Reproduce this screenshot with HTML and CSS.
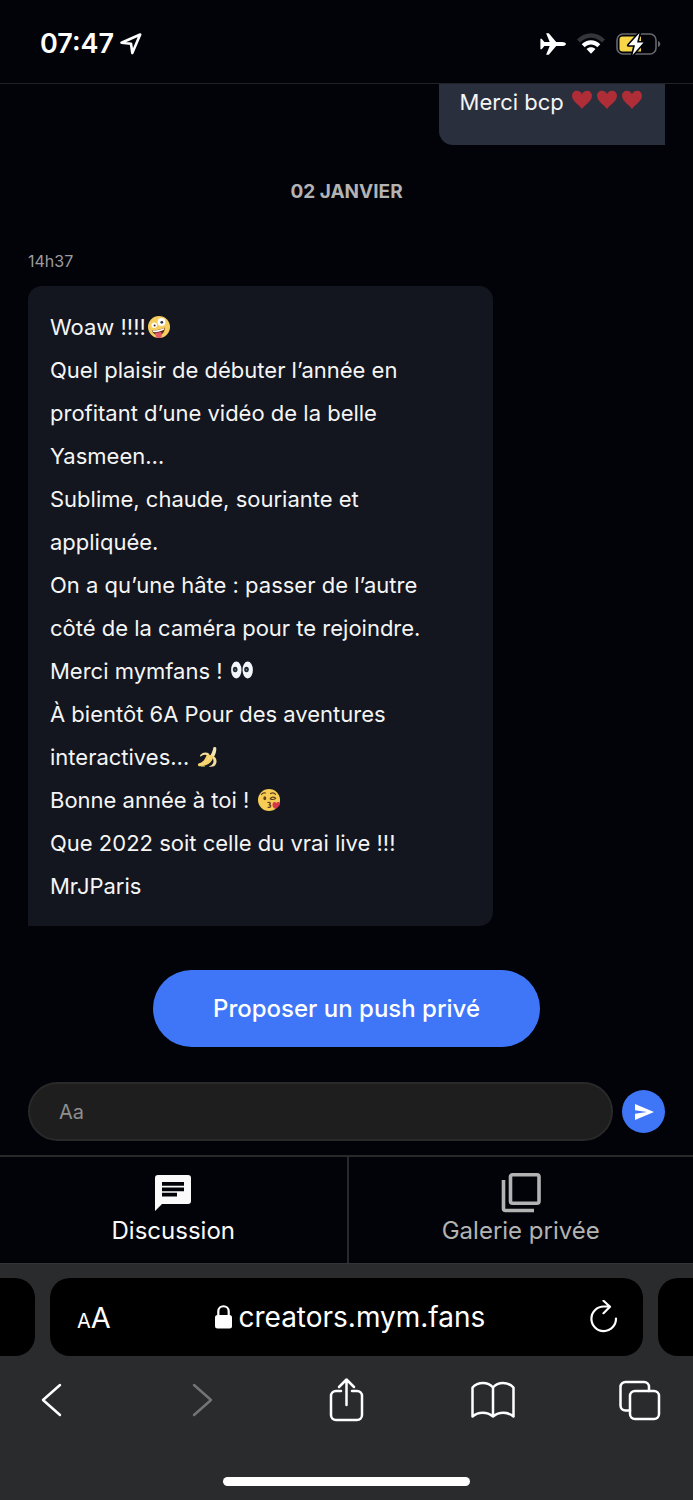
FILE: index.html
```html
<!DOCTYPE html>
<html lang="fr">
<head>
<meta charset="utf-8">
<meta name="viewport" content="width=device-width, initial-scale=1">
<title>Discussion</title>
<link rel="stylesheet" href="styles.css">
</head>
<body>
<svg class="defs" aria-hidden="true">
  <symbol id="heart" viewBox="0 0 20 20"><path fill="#af2d36" d="M10 19C8 15.600 0 11.500 0 5.800 0 2.900 2.200.8 4.900.8 7.200.8 9.200 2.200 10 4.300 10.800 2.200 12.800.8 15.100.8 17.800.8 20 2.900 20 5.800 20 11.500 12 15.600 10 19Z"/></symbol>
</svg>
<div class="app">
  <header class="status">
    <div class="status-time">
      <span>07:47</span>
      <svg width="22" height="22" viewBox="0 0 22 22" aria-hidden="true"><path fill="none" stroke="#fff" stroke-width="2.600" stroke-linejoin="round" d="M20.200 1.500 12.300 20 11 10.800 1.500 9.700Z"/></svg>
    </div>
    <div class="status-icons">
      <svg width="26" height="24" viewBox="0 0 26 24" aria-hidden="true"><path fill="#fff" d="M26 12c0-1.200-1.900-2.100-4-2.100h-5.800L8.800 1.200H6.100l3.600 8.700H4.400L1.700 6.800H.4v10.400h1.300l2.700-3.100h5.300l-3.600 8.700h2.700l7.400-8.700H22c2.100 0 4-.9 4-2.100Z"/></svg>
      <svg width="28" height="22" viewBox="0 0 28 22" aria-hidden="true">
        <path fill="#343538" d="M0 6.500C8-2 20-2 28 6.500l-3 3C18.500 3 9.500 3 3 9.500Z"/>
        <path fill="#fff" d="M4.700 11.200c5.400-5.300 13.200-5.300 18.600 0l-3 3c-3.700-3.500-8.900-3.500-12.600 0ZM9.500 16c2.600-2.300 6.400-2.300 9 0L14 20.800Z"/>
      </svg>
      <svg width="46" height="26" viewBox="0 0 46 26" aria-hidden="true">
        <rect x="1" y="3" width="39" height="20" rx="6" fill="none" stroke="#66686b" stroke-width="1.600"/>
        <path fill="#66686b" d="M42 10c3 .8 3 5.200 0 6Z"/>
        <path fill="#f8d649" d="M6.500 5.500H25v15H6.500a3 3 0 0 1-3-3v-9a3 3 0 0 1 3-3Z"/>
        <path fill="#fff" stroke="#020308" stroke-width="3.200" stroke-linejoin="round" paint-order="stroke" d="M23.500 2 12.500 14.200h6.500L16.500 24 27.500 11.500h-6.500Z"/>
      </svg>
    </div>
  </header>

  <main class="chat">
    <div class="bubble bubble-sent">Merci bcp <span class="hearts" role="img" aria-label="trois cœurs rouges"><svg width="20" height="20"><use href="#heart"/></svg><svg width="20" height="20"><use href="#heart"/></svg><svg width="20" height="20"><use href="#heart"/></svg></span></div>
    <h2 class="date">02 JANVIER</h2>
    <time class="time">14h37</time>
    <div class="bubble bubble-received">Woaw !!!!<svg class="emoji" viewBox="0 0 22 22" role="img" aria-label="visage farfelu">
        <circle cx="11" cy="11" r="11" fill="#f6ce5f"/>
        <circle cx="6.200" cy="9.300" r="2.700" fill="#fff"/><circle cx="6.600" cy="9.500" r="1" fill="#3c2a1c"/>
        <circle cx="13.500" cy="6" r="3.900" fill="#fff"/><circle cx="13.800" cy="6.300" r="1.400" fill="#2c3a4a"/>
        <path fill="#5b2b1b" d="M3.800 14.200c4.500.6 9-.3 12.700-2.600.7 3.700-1.600 7-5.200 7.500-3.700.5-6.700-1.700-7.500-4.900Z"/>
        <path fill="#fff" d="M4.400 14.400c4.200.4 8.200-.4 11.700-2.300l-.2 1.700c-3.400 1.800-7 2.600-10.900 2.300Z"/>
        <path fill="#e2596c" d="M7.200 17c1.800-.4 4.300-.7 6.200-1.100l.4 3.700c.1 3-5.700 3.200-6 .4Z"/>
      </svg><br>
      Quel plaisir de débuter l’année en<br>
      profitant d’une vidéo de la belle<br>
      Yasmeen…<br>
      Sublime, chaude, souriante et<br>
      appliquée.<br>
      On a qu’une hâte : passer de l’autre<br>
      côté de la caméra pour te rejoindre.<br>
      Merci mymfans ! <svg class="emoji" viewBox="0 0 22 22" role="img" aria-label="yeux">
        <ellipse cx="5.300" cy="10" rx="5.200" ry="8.500" fill="#f3f6fa"/><ellipse cx="16.700" cy="10" rx="5.200" ry="8.500" fill="#f3f6fa"/>
        <ellipse cx="4.200" cy="9.500" rx="2.300" ry="2.800" fill="#1f2a33"/><ellipse cx="15.500" cy="9.500" rx="2.300" ry="2.800" fill="#1f2a33"/>
        <circle cx="4.200" cy="9.800" r=".7" fill="#8b98a5"/><circle cx="15.500" cy="9.800" r=".7" fill="#8b98a5"/>
      </svg><br>
      À bientôt 6A Pour des aventures<br>
      interactives… <svg class="emoji" viewBox="0 0 22 22" role="img" aria-label="banane">
        <path fill="#f5e3b3" d="M16.500 1.200c2.500-.8 3 .2 2.800 2.300-.2 3.500-1.200 5.500-2.500 7.500l-4.200-.6c2-2.700 3.200-5.500 3.900-9.200Z"/>
        <path fill="#f7df9d" d="M3 9.600c2.300-3.500 6-3.900 9.500-1.600l-1 1.700C8.300 8 5.800 8.500 3.500 10.800Z"/>
        <path fill="#f3dc9e" d="M14.500 9.500c5.500 1 6.500 7 3 10.500-2 1-4 .9-5.800.5 4-1.500 5.800-4 4.200-8Z"/>
        <path fill="#f8d068" d="M9.500 9.200c2-.8 4-.5 6.700.8.5 5.300-6.800 11.300-14.200 10.200-1.200-.5-1.500-2-.4-2.800C5.700 16.500 8 13.500 9.500 9.200Z"/>
        <path fill="none" stroke="#fae294" stroke-width="1" d="M12.800 10.500C11.500 14.500 7.500 17.500 3 18.500"/>
        <path fill="none" stroke="#7e9548" stroke-width="1" d="M4 20.400h4"/>
      </svg><br>
      Bonne année à toi ! <svg class="emoji" viewBox="0 0 22 22" role="img" aria-label="bisou">
        <circle cx="11" cy="11" r="11" fill="#f6cc55"/>
        <ellipse cx="6.800" cy="9.300" rx="1.400" ry="2" fill="#60401d"/>
        <g fill="none" stroke="#60401d" stroke-width="1.200" stroke-linecap="round"><path d="M3.500 5.500C4.500 4 6 3.500 7.500 4M12.500 4.500c2-1 4-.5 5 .8M12.300 9.500c1.500-1.800 3.700-2 5.300-.3M12.300 10c1.800.8 3.500.7 5.300-.5M9.800 13.500c3-.7 3.500 1.600 1 2.200 3 .3 2.300 3-.7 2.600"/></g>
        <path fill="#d8344c" d="M17 19.800c-2-1.300-2.900-3.200-2.400-5.100.6-2 2.700-2.300 3.700-.7 1-1.300 3-1.200 3.500.4.600 2.500-2 4.500-4.800 5.400Z"/>
      </svg><br>
      Que 2022 soit celle du vrai live !!!<br>
      MrJParis</div>
    <button class="push" type="button">Proposer un push privé</button>
  </main>

  <form class="composer">
    <input class="composer-input" type="text" placeholder="Aa" aria-label="Message">
    <button class="send" type="button" aria-label="Envoyer"><svg width="20" height="18" viewBox="0 0 20 18" aria-hidden="true"><path fill="#fff" d="M1 1 20 9 1 17V10.800L13 9 1 7.200Z"/></svg></button>
  </form>

  <nav class="tabs">
    <a class="tab tab-active" href="#discussion"><svg width="42" height="42" viewBox="0 0 42 42" aria-hidden="true"><path fill="#fafafa" fill-rule="evenodd" d="M6 3h30a3 3 0 0 1 3 3v23a3 3 0 0 1-3 3H10l-7 7V6a3 3 0 0 1 3-3Zm4 7v3.800h22V10Zm0 5.400v3.800h22v-3.800Zm0 5.400v3.800h15v-3.800Z"/></svg><span>Discussion</span></a>
    <a class="tab" href="#galerie"><svg width="42" height="42" viewBox="0 0 42 42" aria-hidden="true"><g fill="none" stroke="#b3b3b3" stroke-width="3.600"><rect x="10.500" y="2.800" width="28.500" height="28.500" rx="2"/><path d="M3.500 8v28.500a2 2 0 0 0 2 2H34"/></g></svg><span>Galerie privée</span></a>
  </nav>

  <footer class="browser">
    <div class="address-row">
      <div class="card card-left"></div>
      <div class="address">
        <button class="text-size" type="button" aria-label="Taille du texte"><span class="small-a">A</span><span>A</span></button>
        <button class="url" type="button"><svg width="17" height="24" viewBox="0 0 17 24" aria-hidden="true"><rect y="10" width="17" height="13.500" rx="2.500" fill="#fff"/><path fill="none" stroke="#fff" stroke-width="2.200" d="M3.300 11V6.500c0-7 10.400-7 10.400 0V11"/></svg><span>creators.mym.fans</span></button>
        <button class="reload" type="button" aria-label="Actualiser"><svg width="28" height="34" viewBox="0 0 28 34" aria-hidden="true"><path fill="none" stroke="#fff" stroke-width="2.200" stroke-linecap="round" stroke-linejoin="round" d="M26 18.500A12.300 12.300 0 1 1 14 6.500h6M13.500 .8l6.500 5.900-6.500 6.500"/></svg></button>
      </div>
      <div class="card card-right"></div>
    </div>
    <div class="toolbar">
      <button type="button" aria-label="Précédent"><svg viewBox="0 0 44 44"><path d="M31 7 14 22l17 15"/></svg></button>
      <button class="disabled" type="button" aria-label="Suivant" disabled><svg viewBox="0 0 44 44"><path d="M18 7l17 15-17 15"/></svg></button>
      <button type="button" aria-label="Partager"><svg viewBox="0 0 44 44"><path d="M18 13h-5a5 5 0 0 0-5 5v19a5 5 0 0 0 5 5h21a5 5 0 0 0 5-5V18a5 5 0 0 0-5-5h-5M23.500 27V2M16 9l7.500-7.500L31 9"/></svg></button>
      <button type="button" aria-label="Signets"><svg viewBox="0 0 44 44"><path d="M23 9.500C18 3.500 8 3.500 2.500 9.500v29c6-5 14.500-5 20.500 0 6-5 14.500-5 20.500 0v-29C38 3.500 28 3.500 23 9.500v29"/></svg></button>
      <button type="button" aria-label="Onglets"><svg viewBox="0 0 44 44"><rect x="13" y="13" width="29" height="28" rx="5"/><path d="M13 32.500H8.500a5 5 0 0 1-5-5V9a5 5 0 0 1 5-5H27a5 5 0 0 1 5 5v4"/></svg></button>
    </div>
    <div class="home-indicator"></div>
  </footer>
</div>
</body>
</html>
```
FILE: styles.css
```css
* { box-sizing: border-box; }
body {
  margin: 0;
  background: #020308;
  color: #f5f5f5;
  font-family: Inter, "Liberation Sans", sans-serif;
}
button, input { font: inherit; color: inherit; border: 0; padding: 0; background: none; }
.defs { display: none; }
.app { display: flex; flex-direction: column; height: 100vh; }

.status {
  flex: none;
  display: flex;
  justify-content: space-between;
  align-items: center;
  height: 84px;
  padding: 4px 31px 0 40px;
  border-bottom: 1px solid #222326;
  color: #fff;
}
.status-time { display: flex; align-items: center; gap: 6px; font-size: 27px; font-weight: 600; }
.status-icons { display: flex; align-items: center; gap: 11px; }

.chat {
  flex: 1;
  min-height: 0;
  overflow: hidden;
  display: flex;
  flex-direction: column;
  justify-content: flex-end;
  padding: 0 28px 35px;
}
.chat > * { flex: none; }
.bubble { font-size: 22px; line-height: 43px; }
.bubble-sent {
  align-self: flex-end;
  padding: 21px;
  background: #2a2f3d;
  border-radius: 14px 14px 0 14px;
}
.hearts { display: inline-flex; gap: 5px; padding: 0 2px; }
.date { margin: 32px 0 43px; text-align: center; font-size: 19px; line-height: 30px; font-weight: 700; color: #b3b3b3; }
.time { margin-bottom: 14px; font-size: 16px; line-height: 22px; color: #9c9c9e; }
.bubble-received {
  width: 73%;
  padding: 20px 22px 18px;
  background: #13161f;
  border-radius: 14px 14px 14px 0;
}
.emoji { width: 22px; height: 22px; margin-left: 2px; vertical-align: -3px; }
.push {
  align-self: center;
  margin-top: 44px;
  height: 77px;
  padding: 0 60px;
  border-radius: 39px;
  background: #3e76f7;
  color: #fff;
  font-size: 24px;
  font-weight: 500;
}

.composer { flex: none; display: flex; align-items: center; gap: 9px; padding: 0 28px 14px; }
.composer-input {
  flex: 1;
  min-width: 0;
  height: 59px;
  padding: 0 29px;
  border: 2px solid #29292a;
  border-radius: 30px;
  background: #1e1e1e;
  font-size: 20px;
}
.composer-input::placeholder { color: #8f8f8f; opacity: 1; }
.send { display: grid; place-items: center; width: 43px; height: 43px; border-radius: 50%; background: #3e76f7; }

.tabs { flex: none; display: grid; grid-template-columns: 1fr 1fr; border-top: 2px solid #29292b; }
.tab {
  display: flex;
  flex-direction: column;
  align-items: center;
  padding: 15px 0;
  color: #b3b3b3;
  text-decoration: none;
  font-size: 24px;
  line-height: 34px;
}
.tab + .tab { border-left: 2px solid #29292b; }
.tab-active { color: #fafafa; }

.browser { flex: none; padding: 14px 0; background: #2a2b2d; border-top: 1px solid #333436; color: #fff; }
.address-row { display: flex; gap: 15px; }
.card { width: 35px; height: 78px; background: #000; }
.card-left { border-radius: 0 20px 20px 0; }
.card-right { border-radius: 20px 0 0 20px; }
.address {
  flex: 1;
  display: flex;
  justify-content: space-between;
  align-items: center;
  height: 78px;
  padding: 0 25px 0 27px;
  border-radius: 20px;
  background: #000;
}
.text-size { font-size: 29px; }
.small-a { font-size: 20px; }
.url { display: flex; align-items: center; gap: 6px; font-size: 28px; }
.reload { display: flex; }
.toolbar { display: flex; justify-content: space-between; padding: 22px 32px 0 29px; }
.toolbar button { display: flex; }
.toolbar svg {
  width: 44px;
  height: 44px;
  overflow: visible;
  fill: none;
  stroke: #fff;
  stroke-width: 2.500;
  stroke-linecap: round;
  stroke-linejoin: round;
}
.toolbar .disabled svg { stroke: #737476; }
.home-indicator { width: 247px; height: 9px; margin: 55px auto 0; border-radius: 5px; background: #fff; }
```
